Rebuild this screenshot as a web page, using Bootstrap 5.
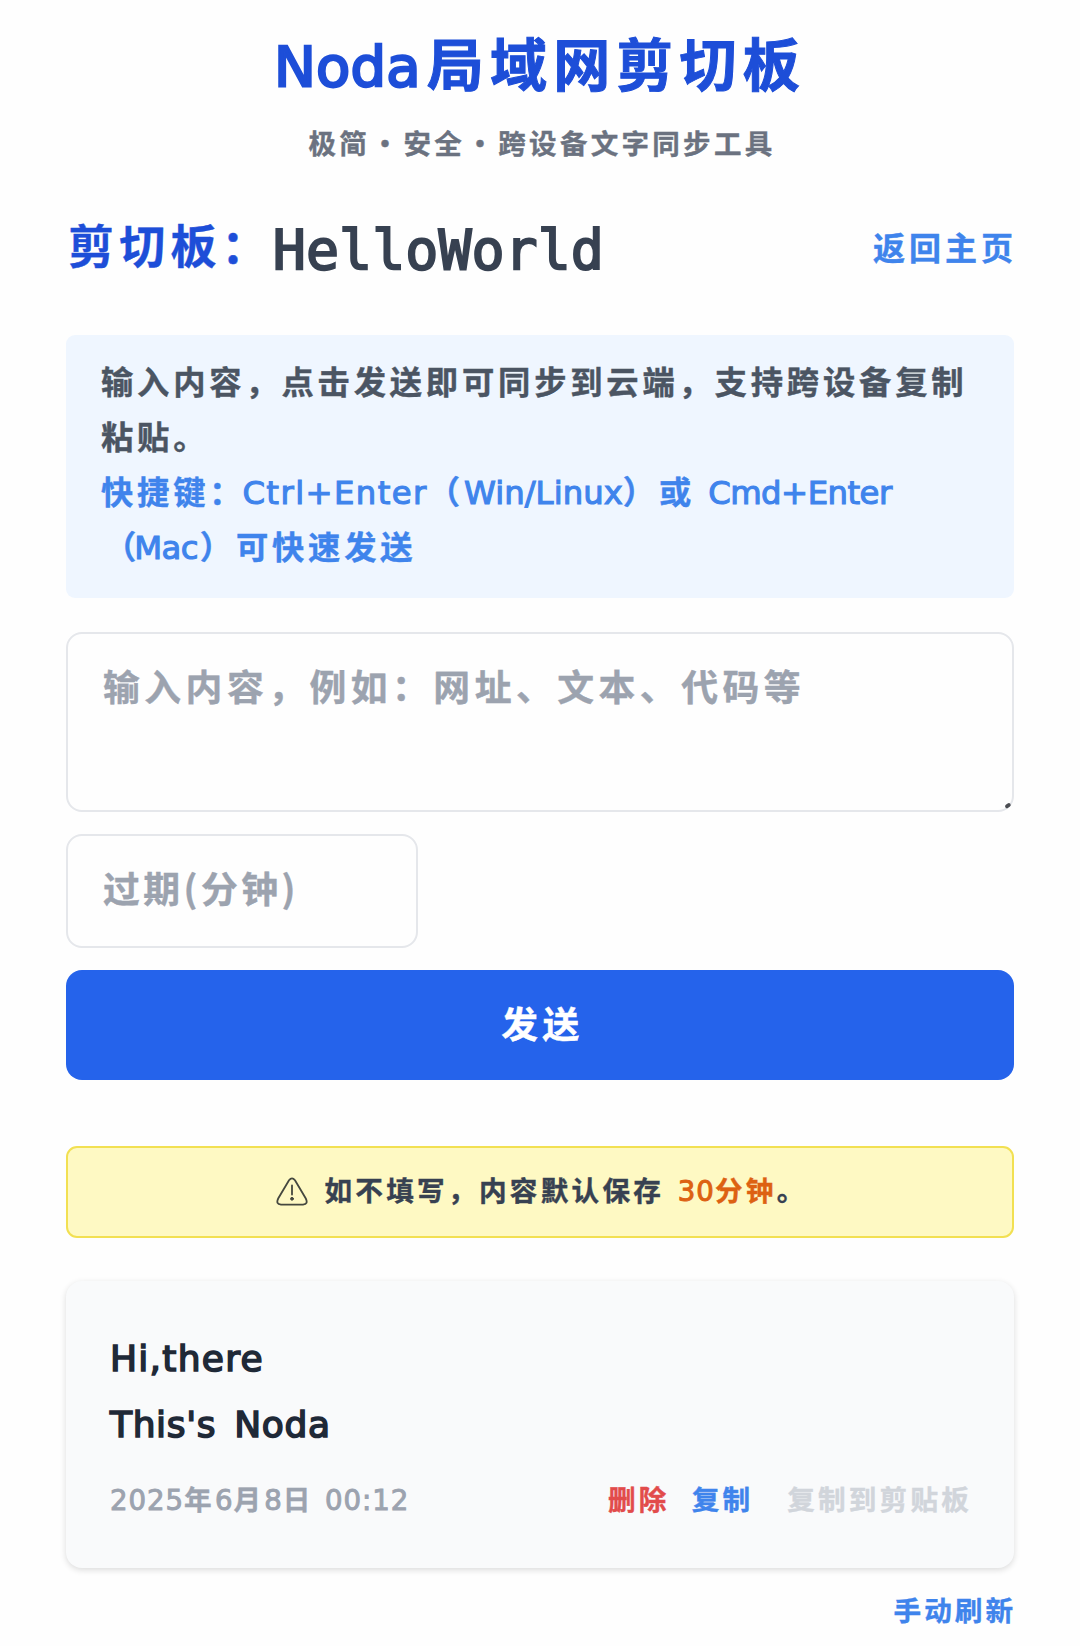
<!DOCTYPE html>
<html lang="zh-CN">
<head>
<meta charset="UTF-8">
<meta name="viewport" content="width=device-width, initial-scale=1">
<title>Noda局域网剪切板</title>
<link href="https://cdn.jsdelivr.net/npm/bootstrap@5.3.0/dist/css/bootstrap.min.css" rel="stylesheet">
<style>
body{background:#fefefe;font-family:"Noto Sans CJK SC",sans-serif;font-weight:700;color:#374151;overflow-x:hidden;-webkit-text-stroke:.4px currentColor}
.page{width:948px;padding-top:24px}
.lat{font-family:"DejaVu Sans","Noto Sans CJK SC",sans-serif;font-weight:400;line-height:0;letter-spacing:.035em;-webkit-text-stroke:.035em currentColor}
.site-title{height:76px;font-size:57px;line-height:74px;letter-spacing:6.2px;color:#1d4ed8;font-weight:700;-webkit-text-stroke:1px currentColor}
.site-title .lat{letter-spacing:.003em;-webkit-text-stroke-width:.045em;margin-right:6px;font-size:56px}
.tagline{font-size:27.5px;line-height:40px;letter-spacing:3.3px;word-spacing:-8.3px;color:#6b7280;margin-top:22px;padding-left:4px}
.board-bar{height:70px;margin-top:50px}
.board-label{font-size:46px;line-height:60px;padding-bottom:8px;letter-spacing:5.2px;color:#1d4ed8;padding-left:2px}
.board-name{font-family:"DejaVu Sans Mono",monospace;font-weight:400;font-size:55px;line-height:70px;padding-top:6px;color:#374151;-webkit-text-stroke:2px currentColor}
.tone-link{color:#3f84ec;text-decoration:none}
.home-link{font-size:32px;letter-spacing:4px;margin-right:-3px;padding-bottom:3px}
.hint{height:263px;margin-top:53px;padding:18px 35px 0;background:#eff6ff;border-radius:9px;font-size:32.3px;line-height:55px;letter-spacing:3.8px;color:#4b5563}
.hint .k1{letter-spacing:.044em;margin-left:-3px}
.hint .k2{letter-spacing:.001em}
.hint .k3{letter-spacing:-.016em;margin-left:2px}
.hint .k4{letter-spacing:-.02em;margin-right:2px}
.hint .lead-in{margin-left:3px;letter-spacing:-2px}
.form-control.field{border:2px solid #e5e7eb;border-radius:16px;background:#fefefe;padding:0 36px 0 35px;font-size:36.8px;font-weight:700;letter-spacing:4.5px;line-height:56px;-webkit-text-stroke:.4px currentColor}
.form-control.field::placeholder{color:#9ca3af;opacity:1}
.field.msg{height:180px;padding-top:23px;resize:none;overflow:hidden}
.form-control.field.ttl{height:114px;width:352px;letter-spacing:3.5px;padding-bottom:8px}
.grip{right:2px;bottom:3px;width:8px;height:7px}
.send{height:110px;border-radius:16px;background:#2563eb;color:#fff;font-size:36.8px;font-weight:700;letter-spacing:4.5px;padding:0 0 5px 5px}
.notice{height:92px;margin-top:66px;padding-left:4px;background:#fef9c3;border:2px solid #f2e052;border-radius:11px;font-size:27.6px;letter-spacing:3.3px;color:#374151}
.notice-text{padding-bottom:5px;word-spacing:4px}
.notice .hot{color:#dd6112}
.clip{height:287px;margin-top:43px;padding:41px 42px 0 44px;background:#f9fafb;border-radius:16px;box-shadow:0 2px 6px rgba(0,0,0,.14)}
.clip-text{font-size:36px;line-height:66px;color:#1f2937;word-spacing:6px;-webkit-text-stroke:0}
.clip-text .lat{-webkit-text-stroke-width:.045em}
.clip-text .tight{letter-spacing:.018em}
.clip-meta{font-size:27.6px;line-height:40px;height:40px;letter-spacing:3.2px;margin-top:24px}
.stamp{color:#9ca3af;word-spacing:2px}
.del{color:#e24b4b}.off{color:#d1d5db}
.refresh{margin-top:21px;margin-right:-2px;font-size:27.6px;line-height:40px;letter-spacing:3px}
.plain-btn{background:none;border:0;padding:0;font:inherit;letter-spacing:inherit}
</style>
</head>
<body>
<main class="page mx-auto">
  <header class="text-center">
    <h1 class="site-title m-0"><span class="lat">Noda</span>局域网剪切板</h1>
    <p class="tagline mb-0">极简 · 安全 · 跨设备文字同步工具</p>
  </header>
  <div class="board-bar d-flex align-items-center justify-content-between">
    <div class="d-flex align-items-center">
      <span class="board-label">剪切板：</span><span class="board-name">HelloWorld</span>
    </div>
    <a class="tone-link home-link" href="#">返回主页</a>
  </div>
  <section class="hint">
    输入内容，点击发送即可同步到云端，支持跨设备复制<br>粘贴。<br>
    <span class="tone-link">快捷键：<span class="lat k1">Ctrl+Enter</span>（<span class="lat k2">Win/Linux</span>）或 <span class="lat k3">Cmd+Enter</span><br><span class="lead-in">（</span><span class="lat k4">Mac</span>）可快速发送</span>
  </section>
  <form class="d-flex flex-column">
    <div class="position-relative" style="margin-top:34px">
      <textarea class="form-control field msg d-block" placeholder="输入内容，例如：网址、文本、代码等"></textarea>
      <svg class="grip position-absolute" viewBox="0 0 8 7"><path d="M3 4.300 4.800 2.900" stroke="#4b4d52" stroke-width="3.800" stroke-linecap="round"/></svg>
    </div>
    <input class="form-control field ttl" style="margin-top:22px" placeholder="过期(分钟)">
    <button type="button" class="btn send w-100" style="margin-top:22px">发送</button>
  </form>
  <div class="notice d-flex align-items-center justify-content-center">
    <svg width="32" height="30" viewBox="0 0 32 30" fill="none" stroke="#45483f" stroke-width="1.800" stroke-linecap="round" class="me-3"><path d="M13 3.200Q16 -.6 19 3.200L29.800 21.500Q32.500 27.200 27 27.600H5Q-.5 27.200 2.200 21.500Z"/><path d="M16 8.500v9"/><circle cx="16" cy="21.800" r="1.400" fill="#45483f" stroke-width="1"/></svg>
    <div class="notice-text">如不填写，内容默认保存 <span class="hot"><span class="lat">30</span>分钟</span>。</div>
  </div>
  <article class="clip">
    <div class="clip-text"><span class="lat">Hi,there</span><br><span class="lat tight">This's Noda</span></div>
    <div class="clip-meta d-flex justify-content-between">
      <span class="stamp"><span class="lat">2025</span>年<span class="lat">6</span>月<span class="lat">8</span>日 <span class="lat">00:12</span></span>
      <div class="d-flex">
        <button class="plain-btn del">删除</button>
        <button class="plain-btn tone-link" style="margin-left:22px">复制</button>
        <button class="plain-btn off" style="margin-left:34px">复制到剪贴板</button>
      </div>
    </div>
  </article>
  <div class="refresh text-end"><a class="tone-link" href="#">手动刷新</a></div>
</main>
<script src="https://cdn.jsdelivr.net/npm/bootstrap@5.3.0/dist/js/bootstrap.bundle.min.js"></script>
</body>
</html>
